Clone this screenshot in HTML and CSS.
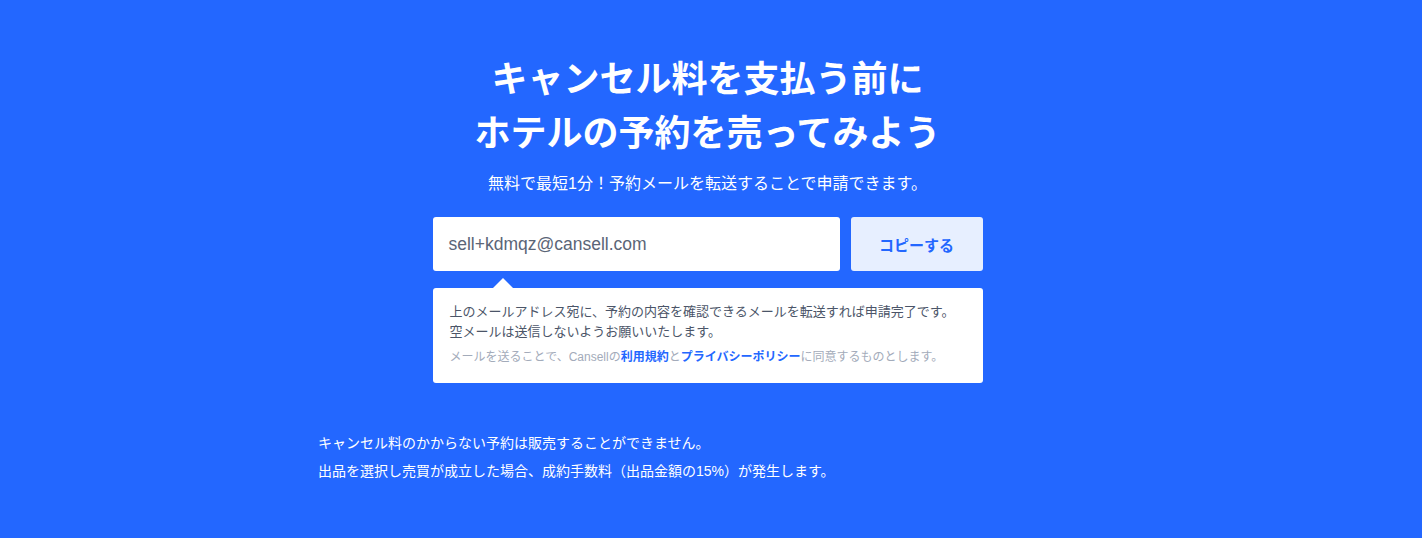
FILE: index.html
```html
<!DOCTYPE html>
<html lang="ja">
<head>
    <meta charset="UTF-8">
    <meta name="viewport" content="width=device-width, initial-scale=1.0">
    <title>Cansell</title>
    <link rel="stylesheet" href="styles.css">
</head>
<body>
    <!-- メイン -->
    <section class="hero">
        <h1 class="hero-title">キャンセル料を支払う前に<br>ホテルの予約を売ってみよう</h1>
        <p class="hero-lead">無料で最短1分！予約メールを転送することで申請できます。</p>

        <div class="mail-form">
            <div class="mail-row">
                <div class="mail-address">sell+kdmqz@cansell.com</div>
                <button class="copy-button">コピーする</button>
            </div>
            <div class="mail-note">
                <p class="note-main">上のメールアドレス宛に、予約の内容を確認できるメールを転送すれば申請完了です。<br>空メールは送信しないようお願いいたします。</p>
                <p class="note-sub">メールを送ることで、Cansellの<a href="#">利用規約</a>と<a href="#">プライバシーポリシー</a>に同意するものとします。</p>
            </div>
        </div>

        <div class="notice">
            <p>キャンセル料のかからない予約は販売することができません。</p>
            <p>出品を選択し売買が成立した場合、成約手数料（出品金額の15%）が発生します。</p>
        </div>
    </section>
</body>
</html>
```

FILE: styles.css
```css
/* 全体 */
body {
    margin: 0;
    padding: 0;
    background-color: #2367ff;
    font-family: "Liberation Sans", "Noto Sans CJK JP", sans-serif;
    color: #fff;
}

.hero {
    padding-top: 53px;
    padding-right: 7px;
    display: flex;
    flex-direction: column;
    align-items: center;
}

/* 見出し */
.hero-title {
    margin: 0;
    font-size: 36px;
    line-height: 54px;
    font-weight: bold;
    text-align: center;
}

.hero-lead {
    margin: 11px 0 0;
    font-size: 16px;
    line-height: 24px;
}

/* メールアドレス */
.mail-form {
    width: 550px;
    margin-top: 21px;
}

.mail-row {
    display: flex;
    gap: 11px;
}

.mail-address {
    flex: 1;
    height: 54px;
    box-sizing: border-box;
    padding: 0 16px;
    display: flex;
    align-items: center;
    background-color: #fff;
    border-radius: 3px;
    color: #5b6577;
    font-size: 17.5px;
}

.copy-button {
    width: 132px;
    height: 54px;
    border: none;
    border-radius: 3px;
    background-color: #e7efff;
    color: #2367ff;
    font-family: inherit;
    font-size: 15px;
    font-weight: bold;
    cursor: pointer;
}

/* 吹き出し */
.mail-note {
    position: relative;
    margin-top: 17px;
    padding: 14px 17px 16px;
    background-color: #fff;
    border-radius: 3px;
}

.mail-note::before {
    content: "";
    position: absolute;
    top: -10px;
    left: 60px;
    border-left: 10px solid transparent;
    border-right: 10px solid transparent;
    border-bottom: 10px solid #fff;
}

.note-main {
    margin: 0;
    font-size: 13px;
    line-height: 20px;
    color: #4b5568;
}

.note-sub {
    margin: 5px 0 0;
    font-size: 12px;
    line-height: 20px;
    color: #a3abba;
}

.note-sub a {
    color: #2367ff;
    font-weight: bold;
    text-decoration: none;
}

/* 注意事項 */
.notice {
    width: 786px;
    margin-top: 46px;
    margin-left: 7px;
}

.notice p {
    margin: 0;
    font-size: 14px;
    line-height: 28px;
}
```
